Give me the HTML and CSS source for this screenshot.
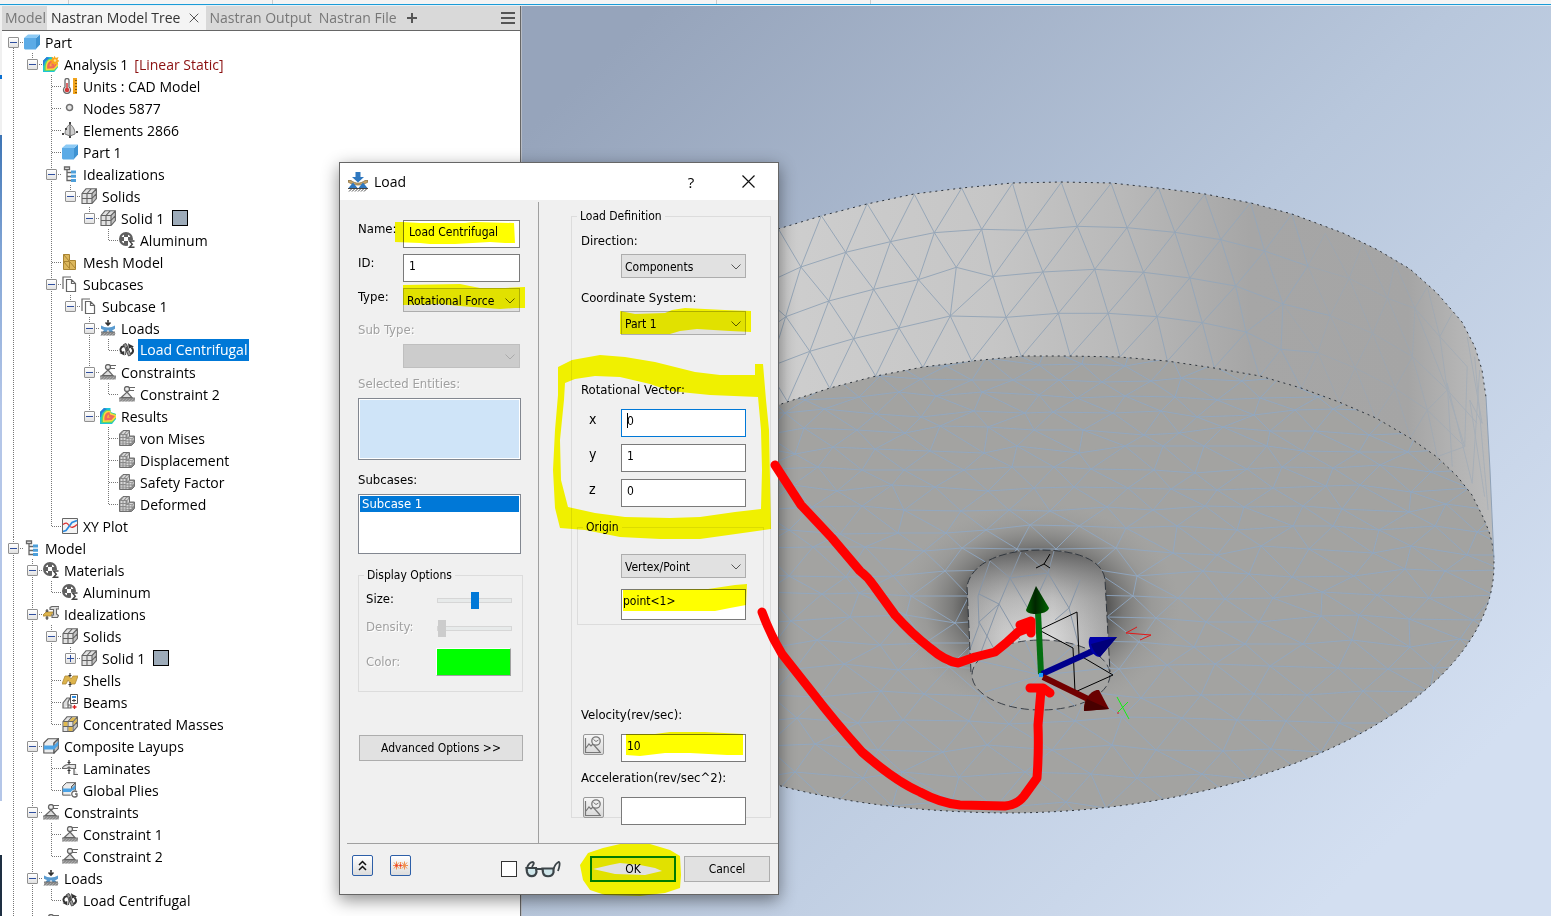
FILE: index.html
```html
<!DOCTYPE html>
<html lang="en">
<head>
<meta charset="utf-8">
<title>Nastran Model Tree - Load</title>
<link rel="stylesheet" href="styles.css">
</head>
<body>
<svg class="defs" aria-hidden="true">
  <defs>
    <symbol id="i-cube" viewBox="0 0 16 16"><path fill="#3f93d2" d="M12 4l4-3.500v10L12 15z"/><path fill="#8ccaf5" d="M0 4l4-3.500h12L12 4z"/><path fill="#5cabe6" d="M0 4h12v11.500H1L0 14.500z"/></symbol>
    <symbol id="i-results" viewBox="0 0 16 16"><path fill="#1cc6d8" d="M0 4l4-4h6.500v4l5.500 2v5l-4 5H0z"/><path fill="#2b7fd6" d="M0 4l4-4 3 1-5 4-1 4H0z"/><path fill="#5ed46a" d="M1.500 15C1 8 3 4 6 2h4.500v2.500L16 6v4l-4 5z"/><path fill="#f7dc3b" d="M3 14c-.5-6 1-10 4-11h3.500v2L16 7v2.500l-4 4z"/><path fill="#f0695a" d="M4.500 12.500C4 8 5.500 4 9.500 4l.5 2.500 5 1.500-3.500 4z"/><path fill="#f7b03b" d="M7 10c0-2 .5-3 2-3.500L9 9l2 .5z"/></symbol>
    <symbol id="i-analysis" viewBox="0 0 16 16"><use href="#i-results" y="1" width="15" height="15"/><path fill="#f8a81c" d="M11.500-.5l1.200 2.600L15.500 1l-1 2.700L17 5l-2.600 1 .9 2.800-2.700-1.200L11.400 10l-1-2.800-2.600.8 1-2.500L6.500 4.300l2.700-1L8.500.7l2.400 1.100z"/><circle cx="12" cy="4.500" r="1.300" fill="#ffe58a"/></symbol>
    <symbol id="i-units" viewBox="0 0 16 16"><rect x="11" y="0" width="4" height="16" fill="#f1a41e"/><path stroke="#8a5a00" d="M13 2.500h2m-2 3h2m-2 3h2m-2 3h2m-2 3h2"/><path fill="#fff" stroke="#6a6a6a" stroke-width="1.300" d="M3 2.500a2 2 0 0 1 4 0V9a3.500 3.500 0 1 1-4 0z"/><path stroke="#d23a3a" stroke-width="1.500" d="M5 5v6"/><circle cx="5" cy="12" r="2.300" fill="#d23a3a"/></symbol>
    <symbol id="i-node" viewBox="0 0 16 16"><circle cx="7.500" cy="7.500" r="3" fill="#e6e6e6" stroke="#707070" stroke-width="1.500"/></symbol>
    <symbol id="i-element" viewBox="0 0 16 16"><path fill="#cfcfcf" stroke="#777" d="M8 2C4 5 3 9 3 12l5 2 5-2c0-3-1-7-5-10z"/><path stroke="#555" d="M8 2v12"/><path fill="#444" d="M7 0h2v2H7zM0 11h2v2H0zM14 9h2v2h-2zM7 14h2v2H7zM3 6h2v2H3z"/></symbol>
    <symbol id="i-tree" viewBox="0 0 16 16"><path fill="none" stroke="#666" stroke-width="1.300" d="M2.500 1h5v2.500h-5zM5 3.500v11h4M5 6.500h4M5 10.500h4"/><path fill="#4d9fda" d="M9 4.500h5v3H9zM9 8.700h5v3H9zM9 13h5v3H9z"/></symbol>
    <symbol id="i-solids" viewBox="0 0 16 16"><path fill="#e2e2e2" d="M1 5l4-4h10.500v9.500L11 15.500H1z"/><path fill="#c4c4c4" d="M11 5l4.500-4v9.500l-4.500 5z"/><path fill="none" stroke="#636363" stroke-width="1.100" d="M1 5.500L5 .8h10.400v9.700l-4.400 5H1zM1 5.500h10v10M11 5.500l4.400-4.700M6 5.500v10M1 10.500h10M6 5.500L10.200.8M11 10.500l4.400-4.800"/></symbol>
    <symbol id="i-mass" viewBox="0 0 16 16"><use href="#i-solids"/><path fill="#e0b94e" d="M1.600 6.100h3.800v3.800H1.600zM6.600 11.100h3.800v3.800H6.600zM10.500 1.400h3.600L11 4.900H7.300zM11.600 6l3.200-3.400v2.900l-3.200 3.500z"/></symbol>
    <symbol id="i-material" viewBox="0 0 16 16"><circle cx="7" cy="7" r="5.900" fill="#fff" stroke="#5f5f5f" stroke-width="2.200"/><path fill="#5f5f5f" d="M5 1h4v4H5zM1 5h4v4H1zM9 5h4v4H9zM5 9h4v4H5z"/><path fill="#fff" d="M9 8h7v8H9z"/><path fill="none" stroke="#444" stroke-width="1.400" d="M15.500 9h-5l2.800 3.200-2.800 3h5"/></symbol>
    <symbol id="i-mesh" viewBox="0 0 16 16"><path fill="#dcb75c" stroke="#a98432" d="M1.500.5h6v6h6v9h-12z"/><path fill="none" stroke="#a98432" d="M1.500.5l6 7v7M1.500 7.500h6l6 7M1.500 7.500l6 7"/></symbol>
    <symbol id="i-pages" viewBox="0 0 16 16"><path fill="#fff" stroke="#666" stroke-width="1.200" d="M9 1H1v12"/><path fill="#fff" stroke="#666" stroke-width="1.200" d="M4.500 3.500h5l4 4v8h-9zM9.500 3.500v4h4"/></symbol>
    <symbol id="i-loads" viewBox="0 0 16 16"><path fill="none" stroke="#333" stroke-width="1.600" d="M8 0v4M5.500 2.500L8 5l2.500-2.500"/><path fill="#5a9bd0" d="M1 5.500c4 2.500 10 2.500 14 0v3.200c-1.500 1-3 1.500-3 1.500L13.500 12h-4L8 9.800 6.500 12h-4L4 10C3 9.800 2 9.300 1 8.700z"/><path fill="#aaa" d="M1 12h14v3.500H1z"/><path stroke="#555" stroke-width=".8" d="M1 12h14M1 15.500l3-3M4 15.500l3-3M7 15.500l3-3M10 15.500l3-3M13 15.500l2-2"/></symbol>
    <symbol id="i-rot" viewBox="0 0 16 16"><path fill="none" stroke="#333" stroke-width="2" d="M5 4C1 5 .5 8.500 3 10.500M10.500 12.500c4-1 4.500-4.500 2-7"/><path fill="#333" d="M.5 11l4.700-2 .3 4.500zM15 4.500l-5 2V2z"/><path fill="#9a9a9a" stroke="#444" stroke-width=".9" d="M4.500 2.500L7 1.500l5 11.500-2.500 1z"/><path stroke="#444" d="M7.500 5l-1 8M9.500 1.500L8.500 9"/></symbol>
    <symbol id="i-constraint" viewBox="0 0 16 16"><circle cx="8" cy="3" r="2.500" fill="#eee" stroke="#666" stroke-width="1.300"/><path fill="#dedede" stroke="#666" stroke-width="1.200" d="M8 6l5 5.700H2z"/><path stroke="#666" stroke-width="1.200" d="M10 1.500h6M10 4.500h5"/><path fill="#aaa" d="M0 12h16v3.500H0z"/><path stroke="#666" stroke-width=".8" d="M0 12h16M1 15.500l3-3M4 15.500l3-3M7 15.500l3-3M10 15.500l3-3M13 15.500l3-3"/></symbol>
    <symbol id="i-part" viewBox="0 0 16 16"><path fill="#8a8a8a" stroke="#6f6f6f" d="M.5 4L4 .5h6.500V6h5v6.500l-3 3H.5z"/><path fill="#d9d9d9" d="M1.500 5h2v2h-2zM4.500 5h2v2h-2zM1.500 8h2v2h-2zM4.500 8h2v2h-2zM7.500 9h2v1.500h-2zM10.500 9h2v1.500h-2zM1.500 11.200h2v1.500h-2zM4.500 11.200h2v1.500h-2zM7.500 11.500h2V13h-2zM10.500 11.500h2V13h-2zM1.500 13.600h2v1.200h-2zM4.500 13.600h2v1.200h-2zM7.500 13.800h2v1h-2zM4 2l1-1h2L6 2.500 4.500 4h-2zM8 1.500h2L8 4H6zM8.500 4.500L10 3v3L8.500 7.500zM11 7h3.500L13 8.200H9.500zM13.500 9l1.200-1.200v2L13.500 11z"/></symbol>
    <symbol id="i-xy" viewBox="0 0 16 16"><path fill="#f4f4f4" stroke="#666" d="M.5.5h15v15H.5z"/><path fill="none" stroke="#d33" stroke-width="1.300" d="M1 6.500c3-2 4-2 6 1s5 2 8-1"/><path fill="none" stroke="#2b8be0" stroke-width="1.700" d="M1 13.500l3-1 6-8 5-2"/></symbol>
    <symbol id="i-ideal" viewBox="0 0 16 16"><path fill="#ddb44c" stroke="#a98432" stroke-width=".8" d="M0 9l3-3h7l-2 4H0z"/><path stroke="#333" d="M4 3v3M4 10v4M2.500 5h3M2.500 12h3"/><path fill="#ddd" stroke="#666" stroke-width="1.100" d="M7 1.500L9 .5h7V3h-2.500v5l2 1.500-1 2H9V9h1.500V3.500H7z"/></symbol>
    <symbol id="i-shells" viewBox="0 0 16 16"><path fill="#ddb44c" stroke="#ad8838" stroke-width=".8" d="M0 12L3 4h4l2 3 2-3h5l-3 8H9l-3-4-2 4z"/><path stroke="#333" d="M8 1v4M8 10v5M6.500 3.500h3M6.500 12.500h3"/></symbol>
    <symbol id="i-beams" viewBox="0 0 16 16"><path fill="#ddd" stroke="#666" stroke-width="1.200" d="M1 14V9l4-5h3l-2 4v6zM1 14h8v-3H6"/><path fill="#fff" stroke="#555" d="M8.500.5h7v9h-7z"/><path stroke="#2b8be0" stroke-width="2" d="M10 3h4"/><path stroke="#444" d="M10 6.500h4M12 5v3"/><path stroke="#d22" stroke-width="1.300" d="M12.500 11v4M10.500 13h4"/></symbol>
    <symbol id="i-layers" viewBox="0 0 16 16"><path fill="#ececec" stroke="#555" stroke-width="1.100" d="M.8 5L5 .8h10.300L11 5v10H.8z"/><path fill="#bdbdbd" stroke="#555" stroke-width="1.100" d="M11 5L15.300.8v10L11 15.200z"/><path fill="#4ba3e6" d="M.8 7.500H11l4.300-4.200v4L11 11.500H.8z"/></symbol>
    <symbol id="i-laminate" viewBox="0 0 16 16"><path fill="#e6e6e6" stroke="#666" stroke-width="1.200" d="M0 8.500C2 5 5 4.500 7 4.500h6.500v4H9L7 7 5 8.500zM12 8.500v6h4"/><path stroke="#333" stroke-width="1.200" d="M7 0v4M5.500 2.500h3M7 8v6M5.500 10.500h3"/></symbol>
    <symbol id="i-gplies" viewBox="0 0 16 16"><use href="#i-layers" width="14" height="14"/><circle cx="12.500" cy="12" r="4" fill="#fff"/><path fill="none" stroke="#666" stroke-width="1.300" d="M15 10a3 3 0 1 0 0 4v-2h-2"/></symbol>
    <symbol id="i-curve" viewBox="0 0 19 19"><path fill="none" stroke="#777" stroke-width="1.200" d="M1.500 3v14.500H17M2 13l3-4 2 2 2-2 7 8"/><circle cx="12" cy="6" r="4.200" fill="#eee" stroke="#777" stroke-width="1.300"/><path fill="none" stroke="#777" d="M9.500 4.500L12 6.500l2.500-1.500"/></symbol>
  </defs>
</svg>

<div class="app">
  <div class="ribbon-edge" aria-hidden="true"></div>
  <div class="workspace">
    <div class="edge-strip" aria-hidden="true"></div>
    <section class="panel">
      <nav class="tabs" aria-label="Browser tabs">
        <button class="tab tab-first">Model</button>
        <button class="tab tab-active">Nastran Model Tree
          <svg class="tab-x" viewBox="0 0 10 10"><path d="M.7.7l8.600 8.600M9.300.7L.7 9.300"/></svg>
        </button>
        <button class="tab">Nastran Output</button>
        <button class="tab">Nastran File</button>
        <button class="tab-icon" aria-label="Add tab"><svg width="12" height="12" viewBox="0 0 12 12"><path d="M6 1v10M1 6h10"/></svg></button>
        <button class="tab-icon tab-menu" aria-label="Panel menu"><svg width="14" height="12" viewBox="0 0 14 12"><path d="M0 1h14M0 6h14M0 11h14"/></svg></button>
      </nav>
      <ul class="tree">
        <li><div class="row"><button class="tog" aria-label="Collapse"></button><svg class="ico"><use href="#i-cube"/></svg><span class="lbl">Part</span></div>
          <ul>
            <li><div class="row"><button class="tog" aria-label="Collapse"></button><svg class="ico"><use href="#i-analysis"/></svg><span class="lbl">Analysis 1</span><span class="kind">[Linear Static]</span></div>
              <ul>
                <li><div class="row leaf"><svg class="ico"><use href="#i-units"/></svg><span class="lbl">Units : CAD Model</span></div></li>
                <li><div class="row leaf"><svg class="ico"><use href="#i-node"/></svg><span class="lbl">Nodes 5877</span></div></li>
                <li><div class="row leaf"><svg class="ico"><use href="#i-element"/></svg><span class="lbl">Elements 2866</span></div></li>
                <li><div class="row leaf"><svg class="ico"><use href="#i-cube"/></svg><span class="lbl">Part 1</span></div></li>
                <li><div class="row"><button class="tog" aria-label="Collapse"></button><svg class="ico"><use href="#i-tree"/></svg><span class="lbl">Idealizations</span></div>
                  <ul>
                    <li><div class="row"><button class="tog" aria-label="Collapse"></button><svg class="ico"><use href="#i-solids"/></svg><span class="lbl">Solids</span></div>
                      <ul>
                        <li><div class="row"><button class="tog" aria-label="Collapse"></button><svg class="ico"><use href="#i-solids"/></svg><span class="lbl">Solid 1</span><span class="swatch"></span></div>
                          <ul>
                            <li><div class="row leaf"><svg class="ico"><use href="#i-material"/></svg><span class="lbl">Aluminum</span></div></li>
                          </ul>
                        </li>
                      </ul>
                    </li>
                  </ul>
                </li>
                <li><div class="row leaf"><svg class="ico"><use href="#i-mesh"/></svg><span class="lbl">Mesh Model</span></div></li>
                <li><div class="row"><button class="tog" aria-label="Collapse"></button><svg class="ico"><use href="#i-pages"/></svg><span class="lbl">Subcases</span></div>
                  <ul>
                    <li><div class="row"><button class="tog" aria-label="Collapse"></button><svg class="ico"><use href="#i-pages"/></svg><span class="lbl">Subcase 1</span></div>
                      <ul>
                        <li><div class="row"><button class="tog" aria-label="Collapse"></button><svg class="ico"><use href="#i-loads"/></svg><span class="lbl">Loads</span></div>
                          <ul>
                            <li><div class="row leaf"><svg class="ico"><use href="#i-rot"/></svg><span class="lbl lbl-on">Load Centrifugal</span></div></li>
                          </ul>
                        </li>
                        <li><div class="row"><button class="tog" aria-label="Collapse"></button><svg class="ico"><use href="#i-constraint"/></svg><span class="lbl">Constraints</span></div>
                          <ul>
                            <li><div class="row leaf"><svg class="ico"><use href="#i-constraint"/></svg><span class="lbl">Constraint 2</span></div></li>
                          </ul>
                        </li>
                        <li><div class="row"><button class="tog" aria-label="Collapse"></button><svg class="ico"><use href="#i-results"/></svg><span class="lbl">Results</span></div>
                          <ul>
                            <li><div class="row leaf"><svg class="ico"><use href="#i-part"/></svg><span class="lbl">von Mises</span></div></li>
                            <li><div class="row leaf"><svg class="ico"><use href="#i-part"/></svg><span class="lbl">Displacement</span></div></li>
                            <li><div class="row leaf"><svg class="ico"><use href="#i-part"/></svg><span class="lbl">Safety Factor</span></div></li>
                            <li><div class="row leaf"><svg class="ico"><use href="#i-part"/></svg><span class="lbl">Deformed</span></div></li>
                          </ul>
                        </li>
                      </ul>
                    </li>
                  </ul>
                </li>
                <li><div class="row leaf"><svg class="ico"><use href="#i-xy"/></svg><span class="lbl">XY Plot</span></div></li>
              </ul>
            </li>
          </ul>
        </li>
        <li class="open"><div class="row"><button class="tog" aria-label="Collapse"></button><svg class="ico"><use href="#i-tree"/></svg><span class="lbl">Model</span></div>
          <ul>
            <li><div class="row"><button class="tog" aria-label="Collapse"></button><svg class="ico"><use href="#i-material"/></svg><span class="lbl">Materials</span></div>
              <ul>
                <li><div class="row leaf"><svg class="ico"><use href="#i-material"/></svg><span class="lbl">Aluminum</span></div></li>
              </ul>
            </li>
            <li><div class="row"><button class="tog" aria-label="Collapse"></button><svg class="ico"><use href="#i-ideal"/></svg><span class="lbl">Idealizations</span></div>
              <ul>
                <li><div class="row"><button class="tog" aria-label="Collapse"></button><svg class="ico"><use href="#i-solids"/></svg><span class="lbl">Solids</span></div>
                  <ul>
                    <li><div class="row"><button class="tog tog-plus" aria-label="Expand"></button><svg class="ico"><use href="#i-solids"/></svg><span class="lbl">Solid 1</span><span class="swatch"></span></div></li>
                  </ul>
                </li>
                <li><div class="row leaf"><svg class="ico"><use href="#i-shells"/></svg><span class="lbl">Shells</span></div></li>
                <li><div class="row leaf"><svg class="ico"><use href="#i-beams"/></svg><span class="lbl">Beams</span></div></li>
                <li><div class="row leaf"><svg class="ico"><use href="#i-mass"/></svg><span class="lbl">Concentrated Masses</span></div></li>
              </ul>
            </li>
            <li><div class="row"><button class="tog" aria-label="Collapse"></button><svg class="ico"><use href="#i-layers"/></svg><span class="lbl">Composite Layups</span></div>
              <ul>
                <li><div class="row leaf"><svg class="ico"><use href="#i-laminate"/></svg><span class="lbl">Laminates</span></div></li>
                <li><div class="row leaf"><svg class="ico"><use href="#i-gplies"/></svg><span class="lbl">Global Plies</span></div></li>
              </ul>
            </li>
            <li><div class="row"><button class="tog" aria-label="Collapse"></button><svg class="ico"><use href="#i-constraint"/></svg><span class="lbl">Constraints</span></div>
              <ul>
                <li><div class="row leaf"><svg class="ico"><use href="#i-constraint"/></svg><span class="lbl">Constraint 1</span></div></li>
                <li><div class="row leaf"><svg class="ico"><use href="#i-constraint"/></svg><span class="lbl">Constraint 2</span></div></li>
              </ul>
            </li>
            <li><div class="row"><button class="tog" aria-label="Collapse"></button><svg class="ico"><use href="#i-loads"/></svg><span class="lbl">Loads</span></div>
              <ul>
                <li><div class="row leaf"><svg class="ico"><use href="#i-rot"/></svg><span class="lbl">Load Centrifugal</span></div></li>
              </ul>
            </li>
            <li><div class="row"><button class="tog" aria-label="Collapse"></button><svg class="ico"><use href="#i-constraint"/></svg></div></li>
          </ul>
        </li>
      </ul>
    </section>

    <main class="viewport">
      <svg class="scene" viewBox="522 6 1029 910" preserveAspectRatio="xMinYMin slice" role="img" aria-label="Meshed disc with hub">
        <defs>
          <linearGradient id="sky" gradientUnits="userSpaceOnUse" x1="560" y1="100" x2="1330" y2="900"><stop offset="0" stop-color="#96a4bb"/><stop offset=".5" stop-color="#b8c7dc"/><stop offset="1" stop-color="#d3dff1"/></linearGradient>
          <linearGradient id="wall" gradientUnits="userSpaceOnUse" x1="778" y1="0" x2="1494" y2="0"><stop offset="0" stop-color="#cecece"/><stop offset=".3" stop-color="#c6c6c6"/><stop offset=".48" stop-color="#b9b9b9"/><stop offset=".66" stop-color="#a6a6a6"/><stop offset=".88" stop-color="#a5a5a5"/><stop offset=".95" stop-color="#b4b4b4"/><stop offset="1" stop-color="#bcbcbc"/></linearGradient>
          <radialGradient id="shade"><stop offset="0" stop-color="#222" stop-opacity=".9"/><stop offset=".45" stop-color="#2a2a2a" stop-opacity=".75"/><stop offset=".6" stop-color="#3a3a3a" stop-opacity=".4"/><stop offset=".8" stop-color="#555" stop-opacity=".12"/><stop offset="1" stop-color="#777" stop-opacity="0"/></radialGradient>
          <linearGradient id="hub"><stop offset="0" stop-color="#aaa"/><stop offset=".25" stop-color="#c9c9c9"/><stop offset=".6" stop-color="#d6d6d6"/><stop offset="1" stop-color="#a5a5a5"/></linearGradient>
          <linearGradient id="hubtop" x2="0" y2="1"><stop offset="0" stop-color="#444" stop-opacity=".8"/><stop offset=".4" stop-color="#777" stop-opacity=".25"/><stop offset=".7" stop-color="#999" stop-opacity="0"/></linearGradient>
          <linearGradient id="gcone"><stop offset="0" stop-color="#005a00"/><stop offset=".4" stop-color="#002600"/><stop offset="1" stop-color="#006400"/></linearGradient>
          <clipPath id="faceclip"><path id="facep" d="M770 408L787 402 830 388 876 376 923 367 972 361 1022 356 1070 356 1120 357 1167 361 1214 368 1260 376 1301 388 1339 402 1376 418 1410 438 1437 457 1457 476 1472 495 1483 517 1488 529C1493 542 1494 555 1494 565 1494 700 1270 813 1005 813 920 812 840 803 770 783z"/></clipPath>
        </defs>
        <rect x="522" y="6" width="1029" height="910" fill="url(#sky)"/>
        <path fill="url(#wall)" d="M770 233L778 229 821 216 867 204 914 194 962 188 1012 183 1061 182 1111 183 1158 188 1205 194 1251 203 1292 214 1343 233 1378 250 1410 269 1437 293 1462 322 1475 347 1482 370 1486 397 1490 470 1494 565 770 600z"/>
        <g class="mesh" transform="translate(770 170) scale(.498 .3333)">
          <path d="M17 322L62 291 152 247 242 215 330 188 425 178 515 181 617 169 717 173 813 187 905 209 993 243 1080 288M17 456L32 440 118 393 208 358 298 329 374 292 448 320 548 306 652 298 750 307 843 324 935 348 1030 402 1125 437M17 580L80 544 168 506 259 474 362 438 474 442 579 430 679 430 777 440 868 458 956 486 1026 538 1100 548"/>
          <path d="M17 177L62 291 103 137 152 247 195 101 242 215 290 73 330 188 385 54 425 178 487 40 515 181 585 37 617 169 685 40 717 173 780 53 813 187 873 73 905 209 965 98 993 243 1048 132 1080 288"/>
          <path d="M17 510L62 291 118 393 152 247 208 358 242 215 298 329 330 188 374 292 425 178 448 320 515 181 548 306 617 169 652 298 717 173 750 307 813 187 843 324 905 209 935 348 993 243 1030 402 1080 288"/>
          <path d="M17 420L32 440 80 544 118 393 168 506 208 358 259 474 298 329 362 438 374 292M362 438L448 320 474 442 548 306 579 430 652 298 679 430 750 307 777 440 843 324 868 458 935 348 956 486 1030 402 1026 538"/>
          <path d="M17 650L35 695 80 544 120 655 168 506 212 618 259 474 307 592 362 438 405 573 474 442 505 560 579 430 603 558 679 430 703 560 777 440 798 573 868 458 892 593 956 486 983 619 1026 538 1067 655"/>
          <path class="faint" d="M1080 288L1163 325 1240 385 1295 415 1345 500 1400 590M1125 437L1210 490 1290 560 1360 660 1420 760M1100 548L1175 594 1255 655 1320 720 1395 830M1080 288L1115 190 1163 325 1190 220 1240 385 1255 280 1295 415 1320 350 1345 500 1370 430M1080 288L1125 437 1163 325 1210 490 1240 385 1290 560 1295 415 1360 660 1345 500M1030 402L1100 548 1125 437 1175 594 1210 490 1255 655 1290 560 1320 720 1360 660 1395 830 1400 590M1067 655L1100 548 1143 697 1175 594 1216 745 1255 655 1286 803 1320 720 1340 860 1395 830M1400 500L1430 760 1405 690 1435 980M1415 560L1442 1020M1425 600L1410 940 1360 640 1370 890"/>
        </g>
        <use href="#facep" fill="#a3a3a1"/>
        <ellipse cx="1038" cy="608" rx="142" ry="104" fill="url(#shade)"/>
        <g clip-path="url(#faceclip)"><path id="face-mesh" class="mesh face" d=""/></g>
        <g fill="none" stroke="#2c333b" stroke-dasharray="2 4">
          <path d="M778 229L821 216 867 204 914 194 962 188 1012 183 1061 182 1111 183 1158 188 1205 194 1251 203 1292 214 1343 233 1378 250 1410 269 1437 293 1462 322 1475 347 1482 370 1486 397"/>
          <use href="#facep"/>
        </g>
        <path fill="none" stroke="#8fa1b6" d="M1486 397L1490 470 1494 560"/>
        <path id="hubwall" fill="url(#hub)" d="M967 586C972 562 1003 550 1040 550S1103 560 1105 580L1110 672 1041 700 971 672z"/>
        <path fill="url(#hubtop)" d="M967 586C972 562 1003 550 1040 550S1103 560 1105 580L1110 672 971 672z"/>
        <path fill="none" stroke="#8796a8" stroke-width="1" d="M990 561L978 596 979 625 968 655M979 594L999 604 1010 578 1021 552M1010 578L990 561M1010 578L1048 573 1025 553M1048 573L1054 551M999 604L979 622 987 636 999 604 1020 640M1010 578L1030 612M1048 573L1030 612M1048 573L1069 608 1055 620M1069 608L1080 580M1069 608L1080 650M987 636L975 668M987 636L1000 660"/>
        <ellipse cx="1041" cy="675" rx="69" ry="35" fill="#a5a5a3" stroke="#3a4048" stroke-dasharray="8 4"/>
        <path class="mesh face" d="M1041 675L975 660M1041 675L985 692M1041 675L1000 648M1041 675L1025 641M1041 675L1010 706M1041 675L1075 644M1041 675L1109 668M1041 675L1075 706"/>
        <path fill="none" stroke="#30363d" stroke-dasharray="8 3" d="M971 672L967 586C972 562 1003 550 1040 550S1103 560 1105 580L1110 672"/>
        <path fill="none" stroke="#000" stroke-width="1" d="M1050 554l-6 10-8 4m8-4l6 4M1039 630l38-18 2 43 34 20-38 17-2-44z"/>
        <path stroke="#036e10" stroke-width="6" d="M1038 612l3 62"/>
        <path fill="url(#gcone)" d="M1036 586l13 22c-1 7-22 8-23 2z"/>
        <path stroke="#00008c" stroke-width="6" d="M1042 674l53-24"/>
        <path fill="#0000a8" d="M1117 637l-17 20c-8 0-14-13-10-20z"/><path fill="#00007a" d="M1117 637l-17 20c-5-3-8-9-9-13z"/>
        <path stroke="#720000" stroke-width="6" d="M1043 677l45 22"/>
        <path fill="#6a0000" d="M1109 709l-10-19c-7-1-16 9-15 21z"/><path fill="#480000" d="M1109 709l-25 2c0-5 1-9 3-12z"/>
        <path fill="#1e9bff" d="M1039 673h4v4h-4z"/>
        <path fill="none" stroke="#e01818" d="M1137 627l-11 6 25 2-11 5M1118 714v-2"/><path fill="none" stroke="#12f012" d="M1117 697l12 22M1128 702l-10 10"/>
      </svg>
    </main>
  </div>

  <form class="dialog" role="dialog" aria-label="Load" onsubmit="return false">
    <header class="titlebar">
      <svg class="title-ico" viewBox="0 0 20 20"><path fill="#2f78c0" d="M7.500 0h5v5H16l-6 5.500L4 5h3.500z"/><path fill="#c8a468" stroke="#7d6538" stroke-width=".7" d="M0 8.500h3c5 3.500 9 3.500 14 0h3V10c-6 4-14 4-20 0z"/><path fill="#2f78c0" d="M5 10.500l4.500 5.500h-9zM15 10.500l4.500 5.500h-9z"/><path stroke="#444" stroke-width="1" d="M0 16.500h20M1 19.500l3-3M4 19.500l3-3M7 19.500l3-3M10 19.500l3-3M13 19.500l3-3M16 19.500l3-3"/></svg>
      <h1>Load</h1>
      <button class="win-btn" aria-label="Help">?</button>
      <button class="win-btn win-close" aria-label="Close"><svg width="13" height="13" viewBox="0 0 13 13"><path d="M.5.5l12 12M12.500.5l-12 12"/></svg></button>
    </header>
    <div class="body">
      <div class="left">
        <div class="field"><label for="name">Name:</label><input id="name" class="text" value="Load Centrifugal"></div>
        <div class="field"><label for="id">ID:</label><input id="id" class="text" value="1"></div>
        <div class="field"><label for="type">Type:</label><span class="combo"><select id="type"><option>Rotational Force</option></select><svg class="chev" viewBox="0 0 10 6"><path d="M.5.5L5 5 9.500.5"/></svg></span></div>
        <label class="above off" for="sub">Sub Type:</label>
        <div class="field indent"><span class="combo combo-off"><select id="sub" disabled><option></option></select><svg class="chev" viewBox="0 0 10 6"><path d="M.5.5L5 5 9.500.5"/></svg></span></div>
        <label class="caption off" for="ents">Selected Entities:</label>
        <select id="ents" class="list list-ents" size="3" disabled></select>
        <label class="caption caption-sub" for="subs">Subcases:</label>
        <select id="subs" class="list" size="3"><option class="picked">Subcase 1</option></select>
        <fieldset class="display">
          <legend>Display Options</legend>
          <div class="opt"><label for="size">Size:</label><input id="size" type="range" value="50"></div>
          <div class="opt"><label class="off" for="dens">Density:</label><input id="dens" type="range" value="0" disabled></div>
          <div class="opt opt-color"><label class="off" for="col">Color:</label><button id="col" class="color" aria-label="Color"></button></div>
        </fieldset>
        <button class="btn adv">Advanced Options &gt;&gt;</button>
      </div>
      <div class="right">
        <fieldset class="def">
          <legend>Load Definition</legend>
          <label class="caption2" for="dir">Direction:</label>
          <span class="combo wide"><select id="dir"><option>Components</option></select><svg class="chev" viewBox="0 0 10 6"><path d="M.5.5L5 5 9.500.5"/></svg></span>
          <label class="caption2 cap-cs" for="cs">Coordinate System:</label>
          <span class="combo wide"><select id="cs"><option>Part 1</option></select><svg class="chev" viewBox="0 0 10 6"><path d="M.5.5L5 5 9.500.5"/></svg></span>
          <p class="caption2 cap-rv">Rotational Vector:</p>
          <div class="vec"><label for="vx">x</label><span class="caret-box"><input id="vx" class="text focus" value="0"></span></div>
          <div class="vec"><label for="vy">y</label><input id="vy" class="text" value="1"></div>
          <div class="vec"><label for="vz">z</label><input id="vz" class="text" value="0"></div>
          <fieldset class="origin">
            <legend>Origin</legend>
            <span class="combo"><select aria-label="Origin type"><option>Vertex/Point</option></select><svg class="chev" viewBox="0 0 10 6"><path d="M.5.5L5 5 9.500.5"/></svg></span>
            <input class="text point" aria-label="Origin point" value="point&lt;1&gt;">
          </fieldset>
          <label class="caption2 cap-vel" for="vel">Velocity(rev/sec):</label>
          <div class="rate"><button class="mini" aria-label="Velocity table"><svg width="19" height="19"><use href="#i-curve"/></svg></button><input id="vel" class="text" value="10"></div>
          <label class="caption2 cap-acc" for="acc">Acceleration(rev/sec^2):</label>
          <div class="rate rate-last"><button class="mini" aria-label="Acceleration table"><svg width="19" height="19"><use href="#i-curve"/></svg></button><input id="acc" class="text" value=""></div>
        </fieldset>
      </div>
    </div>
    <footer class="foot">
      <button class="sq" aria-label="Collapse dialog"><svg width="19" height="19" viewBox="0 0 19 19"><path fill="none" stroke="#111" stroke-width="1.500" d="M6 9l3.500-3.500L13 9M6 14l3.500-3.500L13 14"/></svg></button>
      <button class="sq sq2" aria-label="Highlight"><svg width="19" height="19" viewBox="0 0 19 19"><path fill="none" stroke="#f09050" d="M2 9.500h15M3 6.500l5 6M8 6.500l-5 6M5.500 5.500v8M11 6.500l5 6M16 6.500l-5 6M13.500 5.500v8M9.500 6v7"/><path fill="#e33" d="M4.500 8.500h2v2h-2zM8.500 8.500h2v2h-2z"/></svg></button>
      <input class="check" type="checkbox" aria-label="Preview">
      <svg class="glasses" viewBox="0 0 36 17"><path fill="#cfe6ea" stroke="#3c4448" stroke-width="2.200" d="M1.500 7h9.500l.5 4c-1 5.500-8.500 5.500-9.500 0zM17.500 7.500h11v4c-1.500 5-9.500 5-10.500 0z"/><path fill="none" stroke="#3c4448" stroke-width="1.800" d="M11.500 8h6M2 7c1-3 3-6 6-6 2 1 0 3-1 5M28.500 8c1-3 3-6 5-7 2 0 1 5-.5 9"/></svg>
      <button class="btn ok">OK</button>
      <button class="btn cancel">Cancel</button>
    </footer>
  </form>

  <svg class="marker" width="1551" height="916" viewBox="0 0 1551 916" aria-hidden="true">
    <g fill="#ff0">
      <path d="M395 222h8l17 1h45l10-1 39 1 1 20h-10l-15-1-35 2h-25l-10-1-25-1z"/>
      <path d="M403 285l57-1 20 4h25l20-1v21h-10l-15 1-40-3-20-2-37 1z"/>
      <path d="M620 311l15 3 30-1 7-3 13-2 40 2 26 1v21l-21-1-33-2-17 2-10 3h-50z"/>
      <path fill-rule="evenodd" d="M558 367L572 360 600 355 625 357 655 362 695 372 720 375 755 375V364H763L766 400 769 430 771 529 750 532 700 539H660L620 537 585 530 560 528 555 508 553 470 555 430 558 395zM565 383L575 379 595 376 620 377 650 384 670 391 710 395 758 397 761 430 762 470 761 509 735 512 700 517 670 518 625 517 595 513 568 507 561 480 560 440 564 400z"/>
      <path d="M623 590l85-1 27-4 12-1-1 21-16 3-15 3h-92z"/>
      <path d="M626 734h29l15-2h35l38 2v21h-16l-37-2h-25l-25 3-14-1z"/>
      <path fill-rule="evenodd" d="M588 853L603 848 620 844H650L670 850 680 856 681 875 680 888 665 893 640 896 605 895 590 890 583 880 580 865zM593 869L610 865 620 863 640 865 655 868 662 871 645 875 615 874z"/>
    </g>
  </svg>
  <svg class="pen" width="1551" height="916" viewBox="0 0 1551 916" aria-hidden="true">
    <g fill="none" stroke="#f00" stroke-width="9" stroke-linecap="round" stroke-linejoin="round">
      <path d="M775 465Q790 488 801 505L832 538 860 571Q868 577 874 586L895 615Q912 634 930 648 945 661 958 663L975 657 995 652Q1008 642 1018 632L1031 627M1020 625l11-4v12"/>
      <path d="M762 612Q770 634 782 654L812 692Q835 722 862 752 895 781 920 792 940 803 960 805L1005 806Q1017 805 1024 796L1037 778Q1039 750 1038 725L1041 690M1030 688h13l7 5"/>
    </g>
  </svg>
</div>
<script src="mesh.js"></script>
</body>
</html>
```

FILE: styles.css
```css
* { box-sizing: border-box; }
body { margin: 0; font-family: "Open Sans", "Noto Sans", sans-serif; color: #000; }
button, input, select { font: inherit; color: inherit; margin: 0; }
.defs { position: absolute; width: 0; height: 0; }

.app { position: relative; display: flex; flex-direction: column; height: 100vh; overflow: hidden; isolation: isolate; background: #fff; }
.ribbon-edge { flex: none; height: 6px; border-bottom: 1px solid #e6f2f8; box-shadow: inset 0 -1px #1a9bd7; background: linear-gradient(90deg, transparent 68px, #ccc 68px 69px, transparent 69px 272px, #ccc 272px 273px, transparent 273px 716px, #ccc 716px 717px, transparent 717px 870px, #ccc 870px 871px, transparent 871px) #f4f4f4; }
.workspace { flex: 1; min-height: 0; display: flex; }
.edge-strip { flex: none; width: 2px; background: linear-gradient(#f0f0f0 69px, #0a6fd0 69px 73px, #f0f0f0 73px 129px, #3d74b4 129px, #7fa3d4 240px, #b4c6e8 400px 795px, #fff 795px 849px, #1e2f42 849px); }

.panel { flex: none; width: 519px; display: flex; flex-direction: column; border-right: 1px solid #666; background: #fff; }
.tabs { flex: none; display: flex; align-items: stretch; height: 25px; padding-right: 5px; background: #d9d9d9; border-bottom: 1px solid #666; }
.tab { display: flex; align-items: center; gap: 9px; padding: 0 4px 0 3px; border: 0; background: none; font-size: 14px; line-height: 20px; color: #777; white-space: nowrap; }
.tab-first { padding-right: 1px; }
.tab-active { padding: 0 7px 0 4px; background: #f4f4f4; color: #333; }
.tab-x { width: 10px; height: 10px; }
.tab-x path, .tab-icon path { fill: none; stroke: #555; stroke-width: 2; }
.tab-x path { stroke-width: 1; }
.tab-icon { display: flex; align-items: center; padding: 0 5px; border: 0; background: none; }
.tab-menu { margin-left: auto; padding: 0; }

.tree { flex: 1; min-height: 0; overflow: hidden; margin: 0; padding: 0 0 0 6px; font-size: 14px; }
.tree ul { margin: 0; padding: 0 0 0 19px; }
.tree li { position: relative; list-style: none; }
.tree li::before { content: ""; position: absolute; left: 5px; top: 0; bottom: 0; width: 1px; background: repeating-linear-gradient(#777 0 1px, transparent 1px 2px); }
.tree li:last-child::before { bottom: auto; height: 11px; }
.tree > li:first-child::before { top: 11px; }
.tree > li.open::before { bottom: 0; height: auto; }
.row { position: relative; display: flex; align-items: center; gap: 5px; height: 22px; background: repeating-linear-gradient(90deg, #777 0 1px, transparent 1px 2px) 6px 11px / 10px 1px no-repeat; white-space: nowrap; }
.leaf { padding-left: 16px; }
.tog { flex: none; width: 11px; height: 11px; padding: 0; border: 1px solid #919191; border-radius: 1px; background: linear-gradient(#2f4f9f, #2f4f9f) center / 7px 1px no-repeat, linear-gradient(#fff, #e2e2e2); }
.tog-plus { background: linear-gradient(#2f4f9f, #2f4f9f) center / 7px 1px no-repeat, linear-gradient(#2f4f9f, #2f4f9f) center / 1px 7px no-repeat, linear-gradient(#fff, #e2e2e2); }
.ico { flex: none; width: 16px; height: 16px; overflow: visible; }
.lbl-on { margin: 0 -2px; padding: 0 2px; line-height: 22px; background: #0078d7; color: #fff; }
.kind { margin-left: 1px; color: #8b1010; }
.swatch { width: 16px; height: 16px; margin-left: 3px; border: 1px solid #000; background: #9dabb9; }

.viewport { flex: 1; min-width: 0; border-left: 1px solid #b8bcc4; }
.scene { display: block; width: 100%; height: 100%; }
.mesh { fill: none; stroke: #97a7b8; stroke-width: 1; }
.mesh path { vector-effect: non-scaling-stroke; }
.mesh .faint { opacity: .5; }
.face { stroke: #8fa8c4; opacity: .85; }

.dialog { position: absolute; left: 339px; top: 162px; width: 440px; border: 1px solid #666; background: #f0f0f0; box-shadow: 0 5px 16px rgba(0, 0, 0, .45); font-family: "DejaVu Sans Condensed", "Noto Sans", sans-serif; font-size: 13px; line-height: 18px; }
.titlebar { display: flex; align-items: center; height: 37px; padding: 0 8px; background: #fff; font-family: "Open Sans", sans-serif; }
.title-ico { width: 20px; height: 20px; }
.titlebar h1 { flex: 1; margin: 0 0 0 6px; font-size: 14px; font-weight: 400; }
.win-btn { width: 28px; padding: 0; border: 0; background: none; font-size: 15px; }
.win-close { margin-left: 29px; margin-right: 8px; }
.win-btn path { fill: none; stroke: #111; stroke-width: 1.200; }
.body { display: flex; }
.left { width: 199px; margin-top: 2px; padding: 18px 15px 5px 18px; border-right: 1px solid #a0a0a0; }
.right { flex: 1; padding: 8px 7px 25px 32px; }
.field { display: flex; align-items: flex-start; margin-bottom: 6px; }
.field label { width: 45px; }
.field .text, .field .combo { width: 117px; }
.indent { padding-left: 45px; margin: 5px 0 0; }
.text { height: 28px; padding: 0 5px 5px; border: 1px solid #7a7a7a; border-radius: 0; background: #fff; outline: 0; min-width: 0; font-size: 12px; }
.combo { position: relative; display: block; height: 24px; font-size: 12px; }
.combo select { display: block; width: 100%; height: 24px; padding: 1px 22px 0 3px; appearance: none; border: 1px solid #adadad; border-radius: 0; background: #e1e1e1; }
.chev { position: absolute; right: 5px; top: 10px; width: 10px; height: 6px; fill: none; stroke: #555; pointer-events: none; }
.combo-off select { border-color: #bfbfbf; background: #ccc; opacity: 1; }
.combo-off .chev { stroke: #aaa; }
.off { color: #a0a0a0; text-shadow: 1px 1px #fff; }
.above, .caption { display: block; margin-top: 9px; }
.caption { margin-top: 7px; }
.caption-sub { margin-top: 11px; }
.list { display: block; width: 163px; height: 60px; margin-top: 5px; padding: 1px; border: 1px solid #828790; border-radius: 0; background: #fff; overflow: hidden; outline: 0; }
.list-ents { height: 62px; background: #cfe4f8 content-box; box-shadow: inset 0 0 0 1px #fff; opacity: 1; }
.list option { min-height: 16px; padding: 0 2px; line-height: 16px; }
.picked { background: #0078d7; color: #fff; }
fieldset { min-width: 0; margin: 0; padding: 0; border: 1px solid #dcdcdc; }
legend { line-height: 16px; padding: 0 3px; font-size: 12px; }
.display { width: 165px; height: 125px; margin-top: 13px; padding: 7px 10px 0 7px; }
.display legend { margin-left: -2px; }
.opt { display: flex; justify-content: space-between; height: 28px; }
.opt input { width: 75px; height: 20px; appearance: none; background: none; }
.opt input::-webkit-slider-runnable-track { height: 5px; border: 1px solid #d6d6d6; background: #e7eaea; }
.opt input::-webkit-slider-thumb { appearance: none; width: 8px; height: 17px; margin-top: -7px; background: #0078d7; }
.opt input:disabled::-webkit-slider-thumb { background: #ccc; }
.opt-color { align-items: center; margin-top: 2px; }
.color { width: 75px; height: 28px; margin-right: 1px; border: 1px solid; border-color: #fff #a0a0a0 #a0a0a0 #fff; background: #0f0; }
.btn { height: 26px; padding: 0; border: 1px solid #adadad; background: #e1e1e1; font-size: 12px; }
.adv { width: 164px; margin: 43px 0 0 1px; }
.def { width: 200px; }
.def > legend { margin-left: 5px; }
.caption2 { display: block; margin: 8px 0 4px 9px; }
.wide { width: 125px; margin-left: 49px; }
.cap-cs { margin-top: 11px; }
.cap-rv { margin: 46px 0 10px 9px; }
.vec { display: flex; align-items: flex-start; margin: 0 0 7px 17px; }
.vec label { width: 32px; font-size: 14px; line-height: 20px; }
.vec .text { width: 125px; }
.vec .focus { border-color: #0078d7; }
.caret-box { position: relative; }
.caret-box::after { content: ""; position: absolute; left: 6px; top: 4px; width: 1px; height: 15px; background: #000; }
.origin { width: 187px; height: 106px; margin: 12px 0 0 5px; padding: 19px 16px 0 43px; }
.origin legend { margin-left: -38px; }
.origin .combo, .origin .point { width: 125px; }
.origin .point { display: block; height: 31px; margin-top: 11px; padding: 0 1px 8px; }
.cap-vel { margin-top: 81px; margin-bottom: 10px; }
.rate { display: flex; align-items: flex-start; gap: 17px; margin-left: 11px; }
.rate .text { width: 125px; }
.mini { display: grid; place-items: center; width: 21px; height: 21px; padding: 0; border: 1px solid #999; border-radius: 2px; background: linear-gradient(#f6f6f6, #d8d8d8); }
.cap-acc { margin: 7px 0 10px 9px; }
.rate-last { margin-bottom: -8px; }
.foot { display: flex; align-items: center; height: 51px; margin-left: 7px; padding: 0 8px 0 5px; border-top: 1px solid #a0a0a0; }
.sq { display: grid; place-items: center; width: 21px; height: 21px; margin-top: -7px; padding: 0; border: 1px solid #2d5fa8; border-radius: 2px; background: linear-gradient(#fff, #dcdcdc); }
.sq2 { margin-left: 17px; }
.check { appearance: none; width: 16px; height: 16px; margin: 0 8px 0 90px; border: 1px solid #333; background: #fff; }
.glasses { width: 36px; height: 17px; }
.ok { width: 86px; margin-left: 29px; border: 2px solid #007a10; }
.cancel { width: 86px; margin-left: 8px; }

.marker, .pen { position: absolute; left: 0; top: 0; pointer-events: none; }
.marker { mix-blend-mode: multiply; }
```

FILE: mesh.js
```js
// Builds the triangulated pattern on the disc's flat face.
(function () {
  function noise(i, j) {
    var s = Math.sin(i * 127.1 + j * 311.7) * 43758.5453;
    return s - Math.floor(s) - 0.5;
  }
  var rows = [], y = 346, j = 0;
  while (y < 840) {
    var step = 44 + (y - 346) * 0.03, row = [];
    for (var i = 0; i < 20; i++) {
      row.push([
        Math.round(740 + (i + (j % 2) / 2) * step + noise(i, j) * 20),
        Math.round(y + noise(j, i + 40) * 9)
      ]);
    }
    rows.push(row);
    y += 16 + (y - 346) * 0.03;
    j++;
  }
  var d = "";
  rows.forEach(function (row, r) {
    d += "M" + row.map(function (p) { return p.join(" "); }).join("L");
    var next = rows[r + 1];
    if (!next) return;
    var a = r % 2 ? next : row, b = r % 2 ? row : next, zig = [];
    for (var i = 0; i < row.length; i++) zig.push(a[i].join(" "), b[i].join(" "));
    d += "M" + zig.join("L");
  });
  document.getElementById("face-mesh").setAttribute("d", d);
})();
```
